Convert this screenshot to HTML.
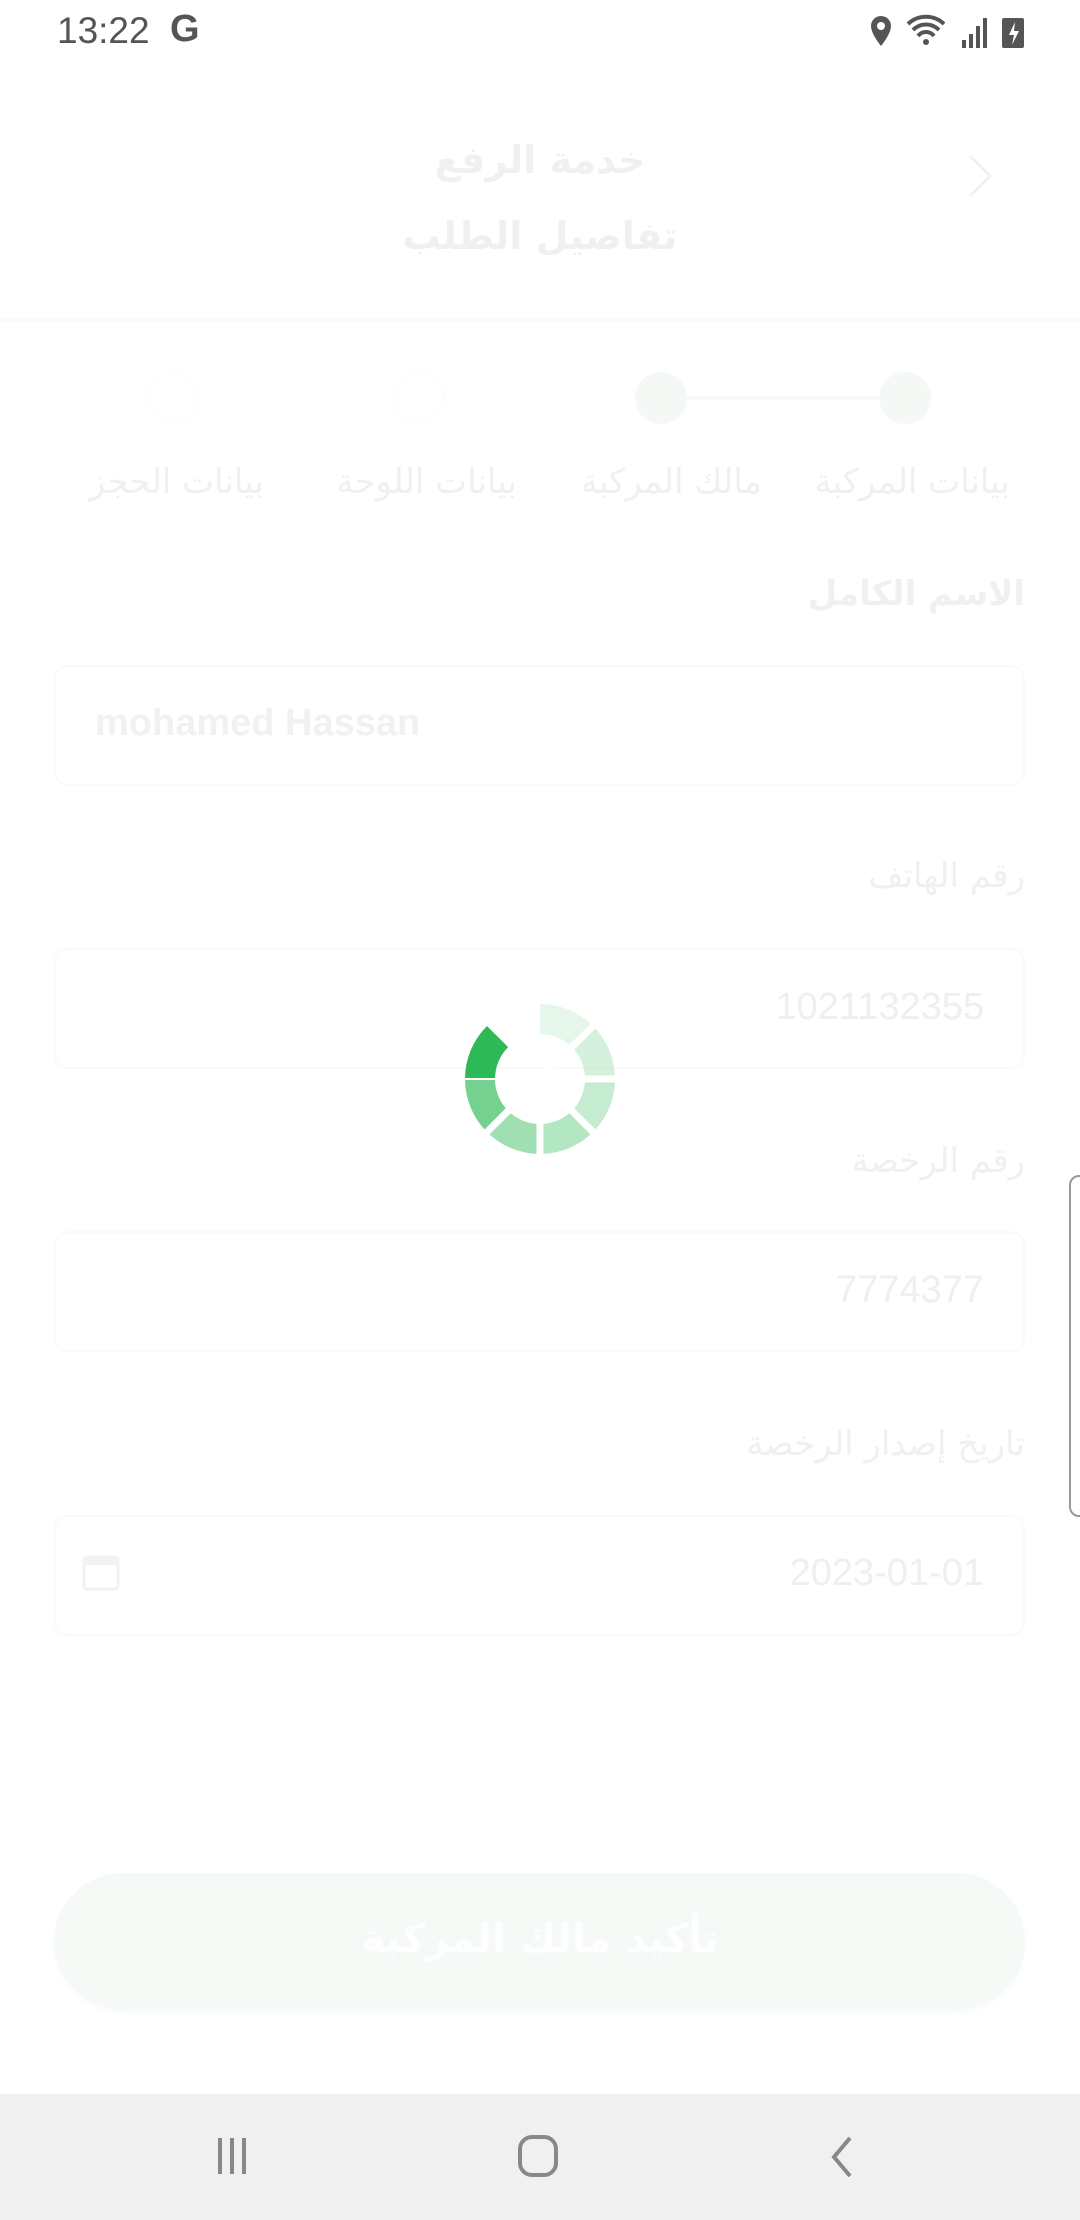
<!DOCTYPE html>
<html><head><meta charset="utf-8"><style>
body{margin:0;width:1080px;height:2220px;background:#fff;position:relative;overflow:hidden;font-family:"Liberation Sans","Noto Sans CJK SC",sans-serif}
.a{position:absolute}
.ar{font-family:"DejaVu Sans","Noto Sans CJK SC",sans-serif;direction:rtl;color:#f0f0f0;white-space:nowrap}
.box{position:absolute;left:54px;width:971px;height:121px;border:2px solid #fafafa;border-radius:14px;box-sizing:border-box}
.num{color:#efefef;font-size:38px;position:absolute;right:96px}
</style></head><body>
<div class="a" style="left:57px;top:10px;font-size:37px;color:#555">13:22</div>
<div class="a" style="left:170px;top:8px;font-size:38px;font-weight:bold;color:#555">G</div>
<svg class="a" style="left:862px;top:14px" width="170" height="36" viewBox="0 0 170 36">
<path d="M19 2a10 10 0 0 0-10 10c0 8 10 20 10 20s10-12 10-20a10 10 0 0 0-10-10z" fill="#555"/><circle cx="19" cy="12" r="4" fill="#fff"/>
<path d="M46 10a26 26 0 0 1 36 0M51 16a18 18 0 0 1 26 0M56 22a10 10 0 0 1 16 0" stroke="#555" stroke-width="4" fill="none"/><circle cx="64" cy="28" r="3" fill="#555"/>
<rect x="100" y="26" width="4" height="8" fill="#555"/><rect x="107" y="20" width="4" height="14" fill="#555"/><rect x="114" y="12" width="4" height="22" fill="#555"/><rect x="121" y="4" width="4" height="30" fill="#555"/>
<rect x="140" y="4" width="22" height="30" rx="2" fill="#555"/><path d="M153 8l-6 13h5l-2 10 7-14h-5z" fill="#fff"/>
</svg>
<svg class="a" style="left:962px;top:152px" width="36" height="48"><path d="M8 4l20 20-20 20" stroke="#f2f2f2" stroke-width="3" fill="none"/></svg>
<div class="a ar" style="left:0;width:1080px;text-align:center;top:138px;font-size:38px;font-weight:bold">خدمة الرفع</div>
<div class="a ar" style="left:0;width:1080px;text-align:center;top:214px;font-size:38px;font-weight:bold">تفاصيل الطلب</div>
<div class="a" style="left:0;top:319px;width:1080px;height:2px;background:#fafafa"></div>
<div class="a" style="left:661px;top:396px;width:244px;height:4px;background:#f6faf7"></div>
<div class="a" style="left:635px;top:372px;width:52px;height:52px;border-radius:50%;background:#f4f9f5"></div>
<div class="a" style="left:879px;top:372px;width:52px;height:52px;border-radius:50%;background:#f4f9f5"></div>
<div class="a" style="left:148px;top:372px;width:48px;height:48px;border-radius:50%;border:2px solid #fdfdfd"></div>
<div class="a" style="left:393px;top:372px;width:48px;height:48px;border-radius:50%;border:2px solid #fdfdfd"></div>
<div class="a ar" style="right:70px;top:462px;font-size:34px">بيانات المركبة</div>
<div class="a ar" style="right:318px;top:462px;font-size:34px">مالك المركبة</div>
<div class="a ar" style="right:563px;top:462px;font-size:34px">بيانات اللوحة</div>
<div class="a ar" style="right:816px;top:462px;font-size:34px">بيانات الحجز</div>
<div class="a ar" style="right:55px;top:574px;font-size:34px;font-weight:bold">الاسم الكامل</div>
<div class="box" style="top:665px"></div>
<div class="a" style="left:95px;top:702px;font-size:38px;font-weight:bold;color:#f1f1f1">mohamed Hassan</div>
<div class="a ar" style="right:55px;top:856px;font-size:34px">رقم الهاتف</div>
<div class="box" style="top:948px"></div>
<div class="num" style="top:986px">1021132355</div>
<div class="a ar" style="right:55px;top:1141px;font-size:34px">رقم الرخصة</div>
<div class="box" style="top:1231px"></div>
<div class="num" style="top:1269px">7774377</div>
<div class="a ar" style="right:55px;top:1424px;font-size:34px">تاريخ إصدار الرخصة</div>
<div class="box" style="top:1515px"></div>
<div class="num" style="top:1552px">2023-01-01</div>
<svg class="a" style="left:82px;top:1551px" width="38" height="40"><rect x="2" y="6" width="34" height="32" rx="3" fill="none" stroke="#f2f2f2" stroke-width="3"/><rect x="2" y="6" width="34" height="8" fill="#f2f2f2"/></svg>
<div class="a" style="left:1069px;top:1175px;width:20px;height:342px;border:2px solid #999;border-radius:14px;box-sizing:border-box"></div>
<div class="a" style="left:54px;top:1873px;width:971px;height:137px;border-radius:70px;background:#f6faf7;box-shadow:0 3px 6px rgba(0,0,0,0.02)"></div>
<div class="a ar" style="left:0;width:1080px;text-align:center;top:1916px;font-size:40px;font-weight:bold;color:#fdfefd">تأكيد مالك المركبة</div>
<svg class="a" style="left:464px;top:1003px" width="152" height="152" viewBox="-76 -76 152 152">
<defs>
<path id="s" d="M0 -75 A75 75 0 0 1 53.03 -53.03 L31.82 -31.82 A45 45 0 0 0 0 -45 Z"/>
</defs>
<g fill="#2db955">
<use href="#s" transform="rotate(0)" opacity="0.12"/>
<use href="#s" transform="rotate(45)" opacity="0.2"/>
<use href="#s" transform="rotate(90)" opacity="0.28"/>
<use href="#s" transform="rotate(135)" opacity="0.36"/>
<use href="#s" transform="rotate(180)" opacity="0.46"/>
<use href="#s" transform="rotate(225)" opacity="0.65"/>
<use href="#s" transform="rotate(270)" opacity="1"/>
</g>
<g stroke="#fff" stroke-width="7">
<line x1="0" y1="0" x2="0" y2="-80" transform="rotate(45)"/>
<line x1="0" y1="0" x2="0" y2="-80" transform="rotate(90)"/>
<line x1="0" y1="0" x2="0" y2="-80" transform="rotate(135)"/>
<line x1="0" y1="0" x2="0" y2="-80" transform="rotate(180)"/>
<line x1="0" y1="0" x2="0" y2="-80" transform="rotate(225)"/>
<line x1="0" y1="0" x2="0" y2="-80" transform="rotate(270)" stroke-width="2"/>
</g>
</svg>
<div class="a" style="left:0;top:2094px;width:1080px;height:126px;background:#f0f0f0"></div>
<svg class="a" style="left:210px;top:2130px" width="60" height="52"><path d="M10 8v36M22 8v36M34 8v36" stroke="#888" stroke-width="4"/></svg>
<svg class="a" style="left:515px;top:2130px" width="50" height="52"><rect x="5" y="7" width="36" height="38" rx="12" fill="none" stroke="#888" stroke-width="4"/></svg>
<svg class="a" style="left:820px;top:2130px" width="44" height="52"><path d="M30 8L14 27l16 19" stroke="#888" stroke-width="4" fill="none"/></svg>
</body></html>
